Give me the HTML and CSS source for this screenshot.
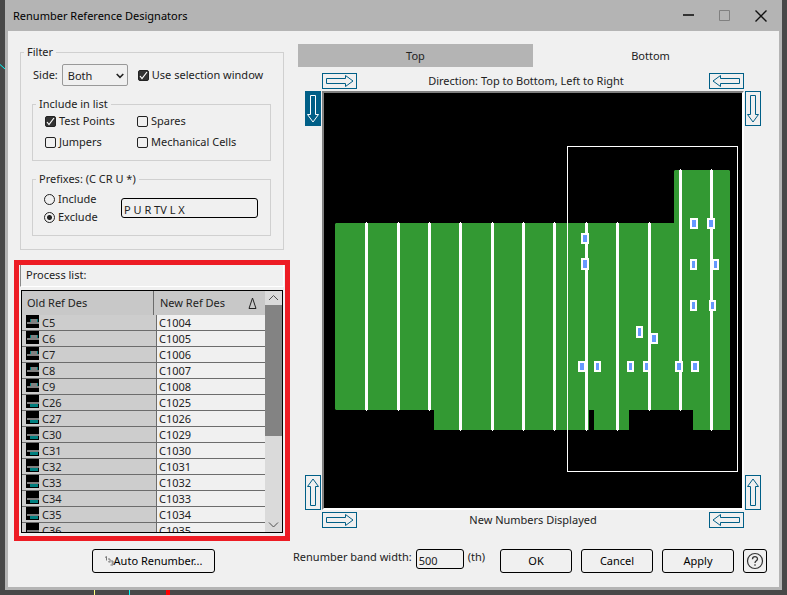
FILE: index.html
```html
<!DOCTYPE html>
<html lang="en">
<head>
    <meta charset="UTF-8">
    <meta name="viewport" content="width=device-width, initial-scale=1.0">
    <title>Renumber Reference Designators</title>
    <link rel="stylesheet" href="styles.css">
</head>
<body>
    <!-- Shared icons -->
    <svg class="sprite" aria-hidden="true">
        <symbol id="part-top" viewBox="0 0 13 13">
            <path fill="#000" d="M0 0h13v13H0z"/>
            <path fill="#008080" d="M4 4h8v4H4z"/>
            <path fill="#808080" d="M5 4h6v4H5zM1 7h12v2H1z"/>
        </symbol>
        <symbol id="part-bottom" viewBox="0 0 13 13">
            <path fill="#000" d="M0 0h13v13H0z"/>
            <path fill="#808080" d="M1 7h12v2H1z"/>
            <path fill="#008080" d="M4 9h8v3H4z"/>
        </symbol>
        <symbol id="arrow-right" viewBox="0 0 35 16">
            <path d="M4.500 5.500H23.500V2.500L31 8L23.500 13.500V10.500H4.500Z"/>
        </symbol>
        <symbol id="arrow-left" viewBox="0 0 35 16">
            <path d="M30.500 5.500H11.500V2.500L4 8L11.500 13.500V10.500H30.500Z"/>
        </symbol>
        <symbol id="arrow-down" viewBox="0 0 16 35">
            <path d="M5.500 4.500H10.500V23.500H13.500L8 31L2.500 23.500H5.500Z"/>
        </symbol>
        <symbol id="arrow-up" viewBox="0 0 16 35">
            <path d="M5.500 30.500H10.500V11.500H13.500L8 4L2.500 11.500H5.500Z"/>
        </symbol>
    </svg>

    <div class="desktop">
        <div class="dialog">
            <header class="titlebar">
                <h1>Renumber Reference Designators</h1>
                <div class="window-buttons">
                    <button type="button" aria-label="Minimize">
                        <svg width="12" height="12" viewBox="0 0 12 12"><path d="M0 5h11" stroke="#333" stroke-width="2"/></svg>
                    </button>
                    <button type="button" aria-label="Maximize" disabled>
                        <svg width="12" height="12" viewBox="0 0 12 12"><path d="M.5 .5h10v10H.5z" fill="none" stroke="#808080"/></svg>
                    </button>
                    <button type="button" aria-label="Close">
                        <svg width="12" height="12" viewBox="0 0 12 12"><path d="M.5 .5l11 11M11.500 .5l-11 11" stroke="#111" stroke-width="1.400"/></svg>
                    </button>
                </div>
            </header>

            <main class="content">
                <div class="left">
                    <fieldset class="group filter">
                        <legend>Filter</legend>
                        <div class="side-row">
                            <label for="side">Side:</label>
                            <span class="select-wrap">
                                <select id="side">
                                    <option>Both</option>
                                    <option>Top</option>
                                    <option>Bottom</option>
                                </select>
                                <svg width="8" height="6" viewBox="0 0 8 6"><path d="M.7 1L4 4.300L7.300 1" fill="none" stroke="#222" stroke-width="1.600"/></svg>
                            </span>
                            <label class="check"><input type="checkbox" checked>Use selection window</label>
                        </div>

                        <fieldset class="group include">
                            <legend>Include in list</legend>
                            <div class="check-grid">
                                <label class="check"><input type="checkbox" checked>Test Points</label>
                                <label class="check"><input type="checkbox">Spares</label>
                                <label class="check"><input type="checkbox">Jumpers</label>
                                <label class="check"><input type="checkbox">Mechanical Cells</label>
                            </div>
                        </fieldset>

                        <fieldset class="group prefixes">
                            <legend>Prefixes: (C CR U *)</legend>
                            <div class="prefix-row">
                                <div class="radios">
                                    <label class="check"><input type="radio" name="prefix">Include</label>
                                    <label class="check"><input type="radio" name="prefix" checked>Exclude</label>
                                </div>
                                <input class="text-box" type="text" value="P U R TV L X" aria-label="Prefixes">
                            </div>
                        </fieldset>
                    </fieldset>

                    <section class="process">
                        <h2>Process list:</h2>
                        <div class="list">
                            <div class="list-view">
                                <table>
                                    <thead>
                                        <tr>
                                            <th><span>Old Ref Des</span></th>
                                            <th><div class="sorted">New Ref Des <svg width="9" height="13" viewBox="0 0 9 13"><path d="M4.500 1L8 11.500H1Z" fill="none" stroke="#222"/></svg></div></th>
                                        </tr>
                                    </thead>
                                    <tbody>
                                        <tr><td><svg class="part"><use href="#part-top"/></svg>C5</td><td>C1004</td></tr>
                                        <tr><td><svg class="part"><use href="#part-top"/></svg>C6</td><td>C1005</td></tr>
                                        <tr><td><svg class="part"><use href="#part-top"/></svg>C7</td><td>C1006</td></tr>
                                        <tr><td><svg class="part"><use href="#part-top"/></svg>C8</td><td>C1007</td></tr>
                                        <tr><td><svg class="part"><use href="#part-top"/></svg>C9</td><td>C1008</td></tr>
                                        <tr><td><svg class="part"><use href="#part-bottom"/></svg>C26</td><td>C1025</td></tr>
                                        <tr><td><svg class="part"><use href="#part-bottom"/></svg>C27</td><td>C1026</td></tr>
                                        <tr><td><svg class="part"><use href="#part-bottom"/></svg>C30</td><td>C1029</td></tr>
                                        <tr><td><svg class="part"><use href="#part-bottom"/></svg>C31</td><td>C1030</td></tr>
                                        <tr><td><svg class="part"><use href="#part-bottom"/></svg>C32</td><td>C1031</td></tr>
                                        <tr><td><svg class="part"><use href="#part-bottom"/></svg>C33</td><td>C1032</td></tr>
                                        <tr><td><svg class="part"><use href="#part-bottom"/></svg>C34</td><td>C1033</td></tr>
                                        <tr><td><svg class="part"><use href="#part-bottom"/></svg>C35</td><td>C1034</td></tr>
                                        <tr><td><svg class="part"><use href="#part-bottom"/></svg>C36</td><td>C1035</td></tr>
                                    </tbody>
                                </table>
                            </div>
                            <div class="scrollbar">
                                <svg width="17" height="14" viewBox="0 0 17 14"><path d="M4 9L8.500 4.500L13 9" fill="none" stroke="#505050"/></svg>
                                <div class="thumb"></div>
                                <svg width="17" height="14" viewBox="0 0 17 14"><path d="M4 4.500L8.500 9L13 4.500" fill="none" stroke="#505050"/></svg>
                            </div>
                        </div>
                    </section>
                </div>

                <div class="right">
                    <div class="tabs" role="tablist">
                        <button type="button" role="tab" class="tab active" aria-selected="true">Top</button>
                        <button type="button" role="tab" class="tab" aria-selected="false">Bottom</button>
                    </div>

                    <div class="preview">
                        <div class="arrow-row top-row">
                            <button type="button" class="arrow wide" aria-label="Top, left to right"><svg><use href="#arrow-right"/></svg></button>
                            <p>Direction: Top to Bottom, Left to Right</p>
                            <button type="button" class="arrow wide" aria-label="Top, right to left"><svg><use href="#arrow-left"/></svg></button>
                        </div>
                        <div class="board-row">
                            <div class="arrow-col">
                                <button type="button" class="arrow tall active" aria-label="Left, top to bottom"><svg><use href="#arrow-down"/></svg></button>
                                <button type="button" class="arrow tall" aria-label="Left, bottom to top"><svg><use href="#arrow-up"/></svg></button>
                            </div>
                            <div class="board">
                                <svg viewBox="324 93 418 415">
                                    <!-- Board outline -->
                                    <path fill="#339933" d="M336 223H674V171L675 170H729L730 171V430H693V410H629V430H594V410H589V430H434V410H336L335 409V224Z"/>
                                    <rect x="567.500" y="146.500" width="170" height="325" fill="none" stroke="#fff"/>
                                    <!-- Components -->
                                    <g fill="#6699ff" stroke="#fff" stroke-width="2">
                                        <rect x="691" y="219" width="6" height="9"/>
                                        <rect x="691" y="260" width="5" height="9"/>
                                        <rect x="691" y="301" width="5" height="9"/>
                                        <rect x="637" y="327" width="5" height="10"/>
                                        <rect x="579" y="362" width="6" height="9"/>
                                        <rect x="595" y="362" width="5" height="9"/>
                                        <rect x="628" y="362" width="5" height="9"/>
                                        <rect x="644" y="362" width="5" height="9"/>
                                        <rect x="692" y="362" width="6" height="9"/>
                                    </g>
                                    <!-- Renumber bands -->
                                    <path fill="#fff" d="M365 223h3v187h-3zM397 223h3v187h-3zM428 223h3v187h-3zM459 223h3v207h-3zM491 223h3v207h-3zM522 223h3v207h-3zM553 223h3v207h-3zM585 223h3v207h-3zM616 223h3v207h-3zM648 223h3v187h-3zM679 170h3v240h-3zM710 170h3v260h-3z"/>
                                    <path fill="#fff" d="M366 222h1v189h-1zM398 222h1v189h-1zM429 222h1v189h-1zM460 222h1v209h-1zM492 222h1v209h-1zM523 222h1v209h-1zM554 222h1v209h-1zM586 222h1v209h-1zM617 222h1v209h-1zM649 222h1v189h-1zM680 169h1v242h-1zM711 169h1v262h-1z"/>
                                    <!-- Components lying over a band -->
                                    <g fill="#6699ff" stroke="#fff" stroke-width="2">
                                        <rect x="582" y="234" width="6" height="9"/>
                                        <rect x="582" y="259" width="6" height="10"/>
                                        <rect x="708" y="219" width="6" height="9"/>
                                        <rect x="713" y="260" width="5" height="9"/>
                                        <rect x="710" y="301" width="5" height="9"/>
                                        <rect x="651" y="334" width="6" height="9"/>
                                        <rect x="676" y="362" width="6" height="9"/>
                                    </g>
                                </svg>
                            </div>
                            <div class="arrow-col">
                                <button type="button" class="arrow tall" aria-label="Right, top to bottom"><svg><use href="#arrow-down"/></svg></button>
                                <button type="button" class="arrow tall" aria-label="Right, bottom to top"><svg><use href="#arrow-up"/></svg></button>
                            </div>
                        </div>
                        <div class="arrow-row">
                            <button type="button" class="arrow wide" aria-label="Bottom, left to right"><svg><use href="#arrow-right"/></svg></button>
                            <p>New Numbers Displayed</p>
                            <button type="button" class="arrow wide" aria-label="Bottom, right to left"><svg><use href="#arrow-left"/></svg></button>
                        </div>
                    </div>
                </div>
            </main>

            <footer class="footer">
                <div class="auto">
                    <button type="button" class="btn"><svg width="9" height="10" viewBox="0 0 9 10"><path d="M0 1.500L1.500 .5V4.500M3 3h2v1.500L3.500 6h2M5.500 5h2.500v2H6.500M8 7v2H5.500" fill="none" stroke="#777"/></svg>Auto Renumber...</button>
                </div>
                <div class="band">
                    <label for="bandWidth">Renumber band width:</label>
                    <input class="text-box" type="text" id="bandWidth" value="500">
                    <span>(th)</span>
                </div>
                <div class="actions">
                    <button type="button" class="btn">OK</button>
                    <button type="button" class="btn">Cancel</button>
                    <button type="button" class="btn">Apply</button>
                    <button type="button" class="btn help" aria-label="Help">
                        <svg width="18" height="18" viewBox="0 0 18 18"><circle cx="9" cy="9" r="7.500" fill="none" stroke="#333" stroke-width="1.200"/><path d="M6.500 7.200C6.500 3.800 11.500 3.900 11.500 7C11.500 8.800 9 8.800 9 11M9 12.300V13.800" fill="none" stroke="#333" stroke-width="1.300"/></svg>
                    </button>
                </div>
            </footer>
        </div>
        <svg class="traces" width="300" height="5" viewBox="0 0 300 5"><path fill="#ffff80" d="M94 0h1v5h-1z"/><path fill="#00ffff" d="M129 0h1v5h-1z"/><path fill="#f00" d="M166 0h4v5h-4z"/></svg>
        <svg class="trace-left" width="5" height="6" viewBox="0 0 5 6"><path d="M0 .5L5 5" stroke="#00ffff"/></svg>
    </div>
</body>
</html>
```

FILE: styles.css
```css
* {
    box-sizing: border-box;
}

body {
    margin: 0;
    background-color: #484848;
    color: #222;
    font-family: "Noto Sans", "Open Sans", sans-serif;
    font-size: 11px;
    line-height: 16px;
}

button, input, select {
    font: inherit;
    color: inherit;
}

h1, h2, p {
    margin: 0;
    font-size: 11px;
    font-weight: normal;
}

svg {
    display: block;
}

.sprite {
    display: none;
}

.desktop {
    position: relative;
}

.traces {
    height: 5px;
}

.trace-left {
    position: absolute;
    left: 0;
    top: 64px;
}

.dialog {
    margin: 0 5px;
    border: 3px solid #b4b4b4;
    border-top: 0;
    background-color: #f0f0f0;
}

/* Title bar */
.titlebar {
    display: flex;
    align-items: center;
    justify-content: space-between;
    height: 31px;
    padding: 0 12px 0 5px;
    background-color: #b4b4b4;
    color: #000;
}

.window-buttons {
    display: flex;
    gap: 24px;
}

.window-buttons button {
    padding: 0;
    border: 0;
    background: none;
}

/* Columns */
.content {
    display: flex;
    align-items: flex-start;
    gap: 8px;
    padding: 13px 11px 8px 6px;
}

.left {
    flex: 0 0 276px;
    min-width: 0;
}

.right {
    flex: 1;
    min-width: 0;
}

/* Filter */
.group {
    min-width: 0;
    margin: 0;
    padding: 0;
    border: 1px solid #d0d0d0;
}

.group legend {
    margin-left: 3px;
    padding: 0 3px;
}

.filter {
    margin: 0 6px 10px;
    padding: 0 12px 13px 11px;
}

.filter > legend {
    margin-left: -8px;
}

.side-row {
    display: flex;
    align-items: center;
    gap: 4px;
    margin-top: 4px;
    padding-left: 1px;
}

.select-wrap {
    position: relative;
    margin-right: 6px;
}

.select-wrap svg {
    position: absolute;
    right: 4px;
    top: 9px;
    pointer-events: none;
}

select {
    appearance: none;
    display: block;
    width: 66px;
    height: 22px;
    padding: 2px 5px 0;
    border: 1px solid #999;
    border-radius: 2px;
    background-color: #f0f0f0;
}

.check {
    display: flex;
    align-items: center;
    gap: 3px;
    height: 16px;
    white-space: nowrap;
}

.check input {
    appearance: none;
    flex: none;
    width: 11px;
    height: 11px;
    margin: 0;
    border: 1px solid #222;
    border-radius: 2px;
}

.check input[type="checkbox"]:checked {
    background: #333 url("data:image/svg+xml,%3Csvg xmlns='http://www.w3.org/2000/svg' viewBox='0 0 9 9'%3E%3Cpath d='M1 5l2 2.500L8 1' fill='none' stroke='%23fff' stroke-width='1.200'/%3E%3C/svg%3E") center / 9px no-repeat;
}

.check input[type="radio"] {
    border-radius: 50%;
}

.check input[type="radio"]:checked {
    background: radial-gradient(circle, #222 0 2px, transparent 3px);
}

.include {
    margin-top: 10px;
}

.check-grid {
    display: grid;
    grid-template-columns: 92px 1fr;
    row-gap: 5px;
    padding: 1px 0 10px 12px;
}

.prefixes {
    margin-top: 10px;
}

.prefix-row {
    display: flex;
    align-items: center;
    justify-content: space-between;
    padding: 4px 12px 10px 11px;
}

.radios {
    display: grid;
    gap: 2px;
}

.text-box {
    height: 20px;
    padding: 2px 2px 0;
    border: 1px solid #000;
    border-radius: 3px;
    background-color: #f0f0f0;
}

.prefix-row .text-box {
    width: 137px;
}

/* Process list */
.process {
    padding: 0 1px 3px;
    border: 5px solid #ed1c24;
}

.process h2 {
    height: 22px;
    margin-bottom: 3px;
    padding: 2px 5px;
    border: 1px solid #fff;
    border-top: 0;
    border-left-color: #888;
}

.list {
    display: flex;
    height: 243px;
    margin: 0 1px;
    border: 1px solid #000;
}

.list-view {
    flex: 1;
    overflow: hidden;
}

table {
    width: 100%;
    border-collapse: separate;
    border-spacing: 0;
    table-layout: fixed;
}

th, td {
    padding: 0;
    text-align: left;
    font-weight: normal;
}

th {
    height: 24px;
    background-color: #c8c8c8;
}

th:first-child {
    width: 135px;
    padding-right: 3px;
}

th span {
    display: block;
    padding-left: 5px;
    border-right: 1px solid #6c6c6c;
    line-height: 24px;
}

.sorted {
    display: flex;
    align-items: center;
    justify-content: space-between;
    padding: 0 8px 0 3px;
}

td {
    height: 16px;
    padding-left: 2px;
    border-bottom: 1px solid #6c6c6c;
    line-height: 15px;
}

td:first-child {
    padding-left: 4px;
    border-right: 1px solid #6c6c6c;
    background-color: #cdcdcd;
}

.part {
    float: left;
    width: 13px;
    height: 13px;
    margin-right: 3px;
}

.scrollbar {
    display: flex;
    flex-direction: column;
    justify-content: space-between;
    width: 17px;
    background-color: #dadada;
}

.thumb {
    height: 131px;
    margin-bottom: auto;
    background-color: #838383;
}

/* Board preview */
.tabs {
    display: flex;
}

.tab {
    flex: 1;
    height: 23px;
    padding: 0;
    border: 0;
    background: none;
}

.tab.active {
    background-color: #b4b4b4;
}

.preview {
    padding: 6px 7px 0;
}

.arrow-row {
    display: flex;
    justify-content: space-between;
    padding: 0 17px;
}

.top-row p {
    padding-right: 14px;
}

.board-row {
    display: flex;
    gap: 1px;
    margin: 2px 0;
}

.arrow-col {
    display: flex;
    flex-direction: column;
    justify-content: space-between;
}

.arrow {
    padding: 0;
    border: 0;
    outline: 1px solid #005f87;
    outline-offset: -1px;
    background: none;
}

.arrow svg {
    width: 100%;
    height: 100%;
    fill: none;
    stroke: #005f87;
}

.arrow.wide {
    width: 35px;
    height: 16px;
}

.arrow.tall {
    width: 16px;
    height: 35px;
}

.arrow.active {
    background-color: #005f87;
}

.arrow.active svg {
    stroke: #fff;
}

.board {
    flex: 1;
    border: 2px solid #fff;
    border-top-color: #808080;
    border-left-color: #808080;
    background-color: #000;
}

/* Footer */
.footer {
    display: flex;
    align-items: flex-start;
    padding: 0 12px 14px 6px;
}

.auto {
    flex: 0 0 279px;
    padding-left: 78px;
}

.btn {
    display: flex;
    align-items: center;
    justify-content: center;
    width: 72px;
    height: 24px;
    padding: 0;
    border: 1px solid #000;
    border-radius: 3px;
    background-color: #f0f0f0;
    color: #000;
}

.auto .btn {
    width: 123px;
}

.btn.help {
    width: 24px;
}

.band {
    display: flex;
    gap: 4px;
    white-space: nowrap;
}

.band .text-box {
    width: 48px;
}

.actions {
    display: flex;
    gap: 9px;
    margin-left: auto;
}
```
